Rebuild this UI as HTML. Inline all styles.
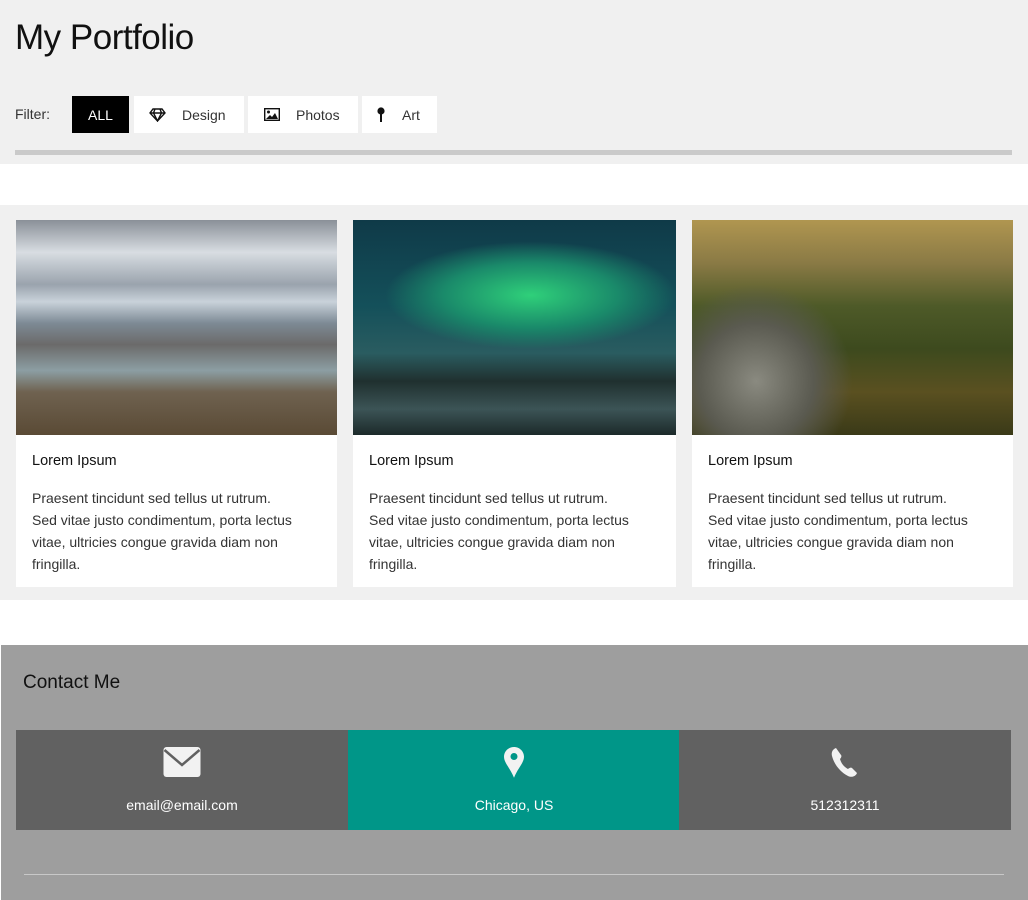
<!DOCTYPE html>
<html><head><meta charset="utf-8"><style>
*{box-sizing:border-box;margin:0;padding:0}
body{width:1028px;height:900px;overflow:hidden;font-family:"Liberation Sans",sans-serif;background:#fff;position:relative;color:#222}
.hdr{position:absolute;left:0;top:0;width:1028px;height:164px;background:#f0f0f0}
h1{position:absolute;left:15px;top:18px;font-size:35px;font-weight:normal;color:#111;letter-spacing:-0.5px}
.flabel{position:absolute;left:15px;top:106px;font-size:14px;color:#333}
.btn{position:absolute;top:96px;height:37px;background:#fff;font-size:14px;color:#333;display:flex;align-items:center}
.bar{position:absolute;left:15px;top:150px;width:997px;height:5px;background:#cacaca}
.sec{position:absolute;left:0;top:205px;width:1028px;height:395px;background:#f0f0f0}
.card{position:absolute;top:220px;height:367px;background:#fff}
.img{height:215px;width:100%}
.card h3{position:absolute;left:16px;top:233px;font-size:14.5px;font-weight:normal;color:#111}
.card p{position:absolute;left:16px;top:267px;font-size:14px;line-height:22px;color:#333;white-space:nowrap}
.foot{position:absolute;left:1px;top:645px;width:1027px;height:255px;background:#9e9e9e}
.foot h2{position:absolute;left:22px;top:27px;font-size:19px;font-weight:normal;color:#111}
.cbox{position:absolute;top:85px;height:100px;color:#fff;font-size:14px;text-align:center}
.cbox span{position:absolute;left:0;right:0;top:67px}
.cbox svg{position:absolute;left:50%;transform:translateX(-50%);top:17px}
.line{position:absolute;left:23px;top:229px;width:980px;height:1px;background:#c8c8c8}
</style></head><body>
<div class="hdr">
<h1>My Portfolio</h1>
<div class="flabel">Filter:</div>
<div class="btn" style="left:72px;width:57px;background:#000;color:#fff;justify-content:center">ALL</div>
<div class="btn" style="left:134px;width:110px">
<svg style="position:absolute;left:15px" width="17" height="14" viewBox="0 0 17 14"><path d="M4 1h9l3 4-7.5 8L1 5z M1 5h15 M6 1l-1.5 4 4 8 4-8L11 1" fill="none" stroke="#111" stroke-width="1.4"/></svg>
<span style="position:absolute;left:48px">Design</span></div>
<div class="btn" style="left:248px;width:110px">
<svg style="position:absolute;left:16px" width="16" height="13" viewBox="0 0 16 13"><rect x="0.7" y="0.7" width="14.6" height="11.6" fill="none" stroke="#111" stroke-width="1.4"/><circle cx="4.5" cy="4" r="1.5" fill="#111"/><path d="M2 11l4-4 2 2 3-4 3 6z" fill="#111"/></svg>
<span style="position:absolute;left:48px">Photos</span></div>
<div class="btn" style="left:362px;width:75px">
<svg style="position:absolute;left:15px" width="8" height="16" viewBox="0 0 8 16"><circle cx="4" cy="4" r="3.6" fill="#111"/><rect x="3" y="6" width="2" height="9" fill="#111"/></svg>
<span style="position:absolute;left:40px">Art</span></div>
<div class="bar"></div>
</div>
<div class="sec"></div>
<div class="card" style="left:16px;width:321px">
<div class="img" style="background:linear-gradient(180deg,#8a9098 0%,#d8dde2 15%,#9aa3ad 30%,#c9d2da 38%,#7d8a95 48%,#6b6a6a 58%,#8c9ea3 70%,#6f6250 80%,#5a4a35 100%)"></div>
<h3>Lorem Ipsum</h3>
<p>Praesent tincidunt sed tellus ut rutrum.<br>Sed vitae justo condimentum, porta lectus<br>vitae, ultricies congue gravida diam non<br>fringilla.</p></div>
<div class="card" style="left:353px;width:323px">
<div class="img" style="background:radial-gradient(ellipse 45% 25% at 55% 35%,#2fd07a 0%,#1a8a6a 60%,transparent 100%),linear-gradient(180deg,#0f3a48 0%,#14505a 40%,#2a5c60 62%,#20302f 75%,#3c5456 88%,#1c2a2a 100%)"></div>
<h3>Lorem Ipsum</h3>
<p>Praesent tincidunt sed tellus ut rutrum.<br>Sed vitae justo condimentum, porta lectus<br>vitae, ultricies congue gravida diam non<br>fringilla.</p></div>
<div class="card" style="left:692px;width:321px">
<div class="img" style="background:radial-gradient(ellipse 30% 45% at 20% 75%,#8a8a80 0%,#5a5a50 60%,transparent 100%),linear-gradient(180deg,#b09650 0%,#8a7a45 20%,#4e5a28 40%,#3d4a1e 60%,#5a5020 80%,#3a3a18 100%)"></div>
<h3>Lorem Ipsum</h3>
<p>Praesent tincidunt sed tellus ut rutrum.<br>Sed vitae justo condimentum, porta lectus<br>vitae, ultricies congue gravida diam non<br>fringilla.</p></div>
<div class="foot">
<h2>Contact Me</h2>
<div class="cbox" style="left:15px;width:332px;background:#616161">
<svg width="37" height="30" viewBox="0 0 37 30"><rect x="0" y="0" width="37" height="30" rx="3" fill="#f2f2f2"/><path d="M1 3l17.5 15L36 3" fill="none" stroke="#616161" stroke-width="2.5"/></svg>
<span>email@email.com</span></div>
<div class="cbox" style="left:347px;width:332px;background:#009688">
<svg width="20" height="31" viewBox="0 0 20 31"><path d="M10 0C4.5 0 0 4.3 0 9.8c0 6 6 11 10 21 4-10 10-15 10-21C20 4.3 15.5 0 10 0z" fill="#f2f2f2"/><circle cx="10" cy="9.5" r="3.5" fill="#009688"/></svg>
<span>Chicago, US</span></div>
<div class="cbox" style="left:678px;width:332px;background:#616161">
<svg width="28" height="30" viewBox="0 0 28 30"><path d="M5 1c-3 1-5 4-4 8 2 8 8 16 16 20 4 2 8 0 9-3l-5-5c-1-1-3 0-4 1-4-2-7-6-8-10 1-1 2-3 1-4z" fill="#f2f2f2"/></svg>
<span>512312311</span></div>
<div class="line"></div>
</div>
</body></html>
